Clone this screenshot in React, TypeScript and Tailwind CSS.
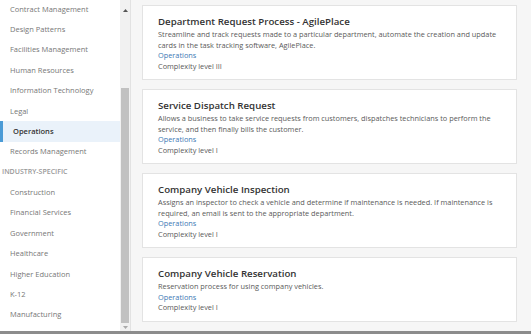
const topItems = [
  "Contract Management",
  "Design Patterns",
  "Facilities Management",
  "Human Resources",
  "Information Technology",
  "Legal",
  "Operations",
  "Records Management",
];

const industryItems = [
  "Construction",
  "Financial Services",
  "Government",
  "Healthcare",
  "Higher Education",
  "K-12",
  "Manufacturing",
];

const cards = [
  {
    title: "Department Request Process - AgilePlace",
    desc: "Streamline and track requests made to a particular department, automate the creation and update cards in the task tracking software, AgilePlace.",
    level: "III",
  },
  {
    title: "Service Dispatch Request",
    desc: "Allows a business to take service requests from customers, dispatches technicians to perform the service, and then finally bills the customer.",
    level: "I",
  },
  {
    title: "Company Vehicle Inspection",
    desc: "Assigns an inspector to check a vehicle and determine if maintenance is needed. If maintenance is required, an email is sent to the appropriate department.",
    level: "I",
  },
  {
    title: "Company Vehicle Reservation",
    desc: "Reservation process for using company vehicles.",
    level: "I",
  },
];

const App = () => {
  return (
    <div
      className="w-[531px] h-[334px] overflow-hidden flex flex-col bg-white"
      style={{ fontFamily: '"Open Sans", "Liberation Sans", sans-serif' }}
    >
      <div className="flex flex-1 min-h-0">
        {/* Sidebar */}
        <div className="w-[120px] shrink-0 bg-white overflow-hidden">
          <div className="mt-[-1px] flex flex-col">
            {topItems.map((item) => {
              const active = item === "Operations";
              return active ? (
                <div
                  key={item}
                  className="h-[20.4px] flex items-center pl-[10px] bg-[#eaf2fa] border-l-[3px] border-[#4b9bd6] text-[7.5px] font-semibold text-[#333]"
                >
                  {item}
                </div>
              ) : (
                <div key={item} className="h-[20.4px] flex items-center pl-[10px] text-[7.5px] text-[#777]">
                  {item}
                </div>
              );
            })}
            <div className="h-[20.4px] flex items-center pl-[2px] text-[7px] font-semibold text-[#999] uppercase">
              Industry-Specific
            </div>
            {industryItems.map((item) => (
              <div key={item} className="h-[20.4px] flex items-center pl-[10px] text-[7.5px] text-[#777]">
                {item}
              </div>
            ))}
          </div>
        </div>

        {/* Scrollbar */}
        <div className="w-[10px] shrink-0 bg-[#f1f1f1] flex flex-col items-center">
          <div className="h-[20px] flex items-center justify-center">
            <svg width="5" height="3" viewBox="0 0 5 3">
              <path d="M0 3 L2.5 0 L5 3 Z" fill="#555" />
            </svg>
          </div>
          <div className="h-[68px]" />
          <div className="w-[8px] flex-1 bg-[#c1c1c1]" />
          <div className="h-[8px] flex items-center justify-center">
            <svg width="5" height="3" viewBox="0 0 5 3">
              <path d="M0 0 L2.5 3 L5 0 Z" fill="#aaa" />
            </svg>
          </div>
        </div>

        {/* Main */}
        <div className="flex-1 border-l border-[#e2e2e2] bg-[#f6f6f6] pl-[11px] pr-[14px] pt-[5px] flex flex-col gap-[9px]">
          {cards.map((c) => (
            <div
              key={c.title}
              className="bg-white border border-[#e3e3e3] pl-[15px] pr-[10px] pt-[9px] pb-[8px] flex flex-col"
            >
              <div className="text-[9.7px] leading-[14px] font-semibold text-[#333]">{c.title}</div>
              <div className="text-[7.35px] leading-[10.5px] text-[#5a5a5a]">{c.desc}</div>
              <div className="text-[7.35px] leading-[10.5px] text-[#3c78b4]">Operations</div>
              <div className="text-[7.35px] leading-[10.5px] text-[#5a5a5a]">Complexity level {c.level}</div>
            </div>
          ))}
        </div>
      </div>
      <div className="h-[3px] bg-[#8c8c8c] shrink-0" />
    </div>
  );
};

export default App;
